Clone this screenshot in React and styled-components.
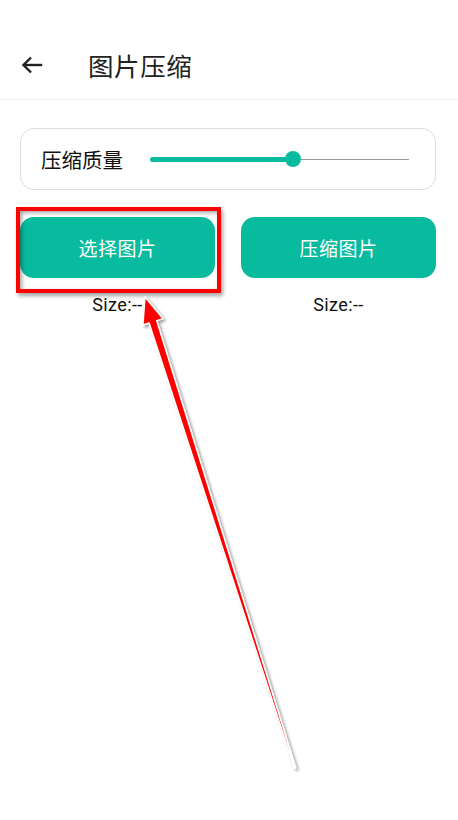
import React from 'react';
import styled, { createGlobalStyle } from 'styled-components';

const GlobalStyle = createGlobalStyle`
  html, body {
    margin: 0;
    padding: 0;
    background: #fff;
  }
  body {
    font-family: Roboto, "Noto Sans CJK SC", sans-serif;
    color: #111;
  }
`;

const colors = {
  primary: '#08ba9e',
  border: '#dedede',
  divider: '#f0f0f0',
  text: '#111',
  red: '#ff0000',
};

const Page = styled.div`
  position: relative;
  width: 458px;
  height: 820px;
  overflow: hidden;
  background: #fff;
`;

const Header = styled.header`
  height: 100px;
  display: flex;
  align-items: center;
  padding: 30px 0 0 18px;
  border-bottom: 1px solid ${colors.divider};
  box-sizing: border-box;
`;

const BackButton = styled.button`
  width: 28px;
  height: 28px;
  padding: 0;
  border: none;
  background: none;
  display: flex;
  align-items: center;
  justify-content: center;
  color: #222;
`;

const Title = styled.h1`
  margin: 0 0 0 42px;
  font-family: "Noto Sans CJK SC", sans-serif;
  font-size: 25.5px;
  font-weight: 400;
  color: #222;
  letter-spacing: 0.6px;
`;

const Content = styled.main`
  padding: 28px 22px 0 20px;
`;

const QualityCard = styled.div`
  height: 62px;
  box-sizing: border-box;
  border: 1px solid ${colors.border};
  border-radius: 14px;
  display: flex;
  align-items: center;
  padding: 0 26px 0 20px;
  gap: 27px;
`;

const Label = styled.span`
  font-family: "Noto Sans CJK SC", sans-serif;
  font-size: 20.5px;
  color: ${colors.text};
  white-space: nowrap;
`;

const Slider = styled.div`
  position: relative;
  flex: 1;
  height: 18px;
  display: flex;
  align-items: center;
`;

const Track = styled.div`
  width: 100%;
  height: 1px;
  background: #999;
`;

const Fill = styled.div`
  position: absolute;
  left: 0;
  top: 50%;
  height: 5px;
  margin-top: -2.5px;
  border-radius: 3px;
  background: ${colors.primary};
`;

const Thumb = styled.div`
  position: absolute;
  top: 50%;
  width: 16px;
  height: 16px;
  margin: -8px 0 0 -8px;
  border-radius: 50%;
  background: ${colors.primary};
`;

const Actions = styled.div`
  display: grid;
  grid-template-columns: 1fr 1fr;
  column-gap: 26px;
  margin-top: 27px;
`;

const Column = styled.div`
  display: flex;
  flex-direction: column;
  align-items: center;
`;

const ActionButton = styled.button`
  width: 100%;
  height: 61px;
  border: none;
  border-radius: 14px;
  background: ${colors.primary};
  color: #fff;
  font-family: "Noto Sans CJK SC", sans-serif;
  font-size: 19px;
  letter-spacing: 0.5px;
`;

const SizeText = styled.span`
  margin-top: 16px;
  font-family: Roboto, sans-serif;
  font-size: 18px;
  letter-spacing: 0.4px;
  color: #111;
`;

const Highlight = styled.div`
  position: absolute;
  left: 16px;
  top: 207px;
  width: 205px;
  height: 86px;
  box-sizing: border-box;
  border: 4px solid ${colors.red};
  box-shadow: 2px 3px 4px rgba(0, 0, 0, 0.35), inset 2px 2px 4px rgba(0, 0, 0, 0.35);
  pointer-events: none;
`;

const ArrowLayer = styled.svg`
  position: absolute;
  left: 0;
  top: 0;
  pointer-events: none;
`;

function BackIcon() {
  return (
    <svg width="24" height="24" viewBox="0 0 24 24" fill="none" stroke="currentColor" strokeWidth="2.4" strokeLinecap="square">
      <path d="M21 12H4" />
      <path d="M11 4.5L3.5 12l7.5 7.5" strokeLinecap="butt" />
    </svg>
  );
}

function QualitySlider({ value }) {
  return (
    <Slider>
      <Track />
      <Fill style={{ width: `${value}%` }} />
      <Thumb style={{ left: `${value}%` }} />
    </Slider>
  );
}

function Annotation() {
  return (
    <>
      <Highlight />
      <ArrowLayer width="458" height="820" viewBox="0 0 458 820">
        <defs>
          <filter id="shadow" x="-20%" y="-5%" width="140%" height="110%">
            <feDropShadow dx="2" dy="2" stdDeviation="1.5" floodColor="#000" floodOpacity="0.4" />
          </filter>
        </defs>
        <polygon
          points="145,297 162.9,318.6 156.7,320.6 295.6,767.8 294.4,768.2 149.1,323 142.9,325"
          fill={colors.red}
          stroke="#fff"
          strokeWidth="1.5"
          strokeLinejoin="round"
          filter="url(#shadow)"
        />
      </ArrowLayer>
    </>
  );
}

export default function App() {
  return (
    <Page>
      <GlobalStyle />
      <Header>
        <BackButton aria-label="返回">
          <BackIcon />
        </BackButton>
        <Title>图片压缩</Title>
      </Header>
      <Content>
        <QualityCard>
          <Label>压缩质量</Label>
          <QualitySlider value={55.4} />
        </QualityCard>
        <Actions>
          <Column>
            <ActionButton>选择图片</ActionButton>
            <SizeText>Size:--</SizeText>
          </Column>
          <Column>
            <ActionButton>压缩图片</ActionButton>
            <SizeText>Size:--</SizeText>
          </Column>
        </Actions>
      </Content>
      <Annotation />
    </Page>
  );
}
